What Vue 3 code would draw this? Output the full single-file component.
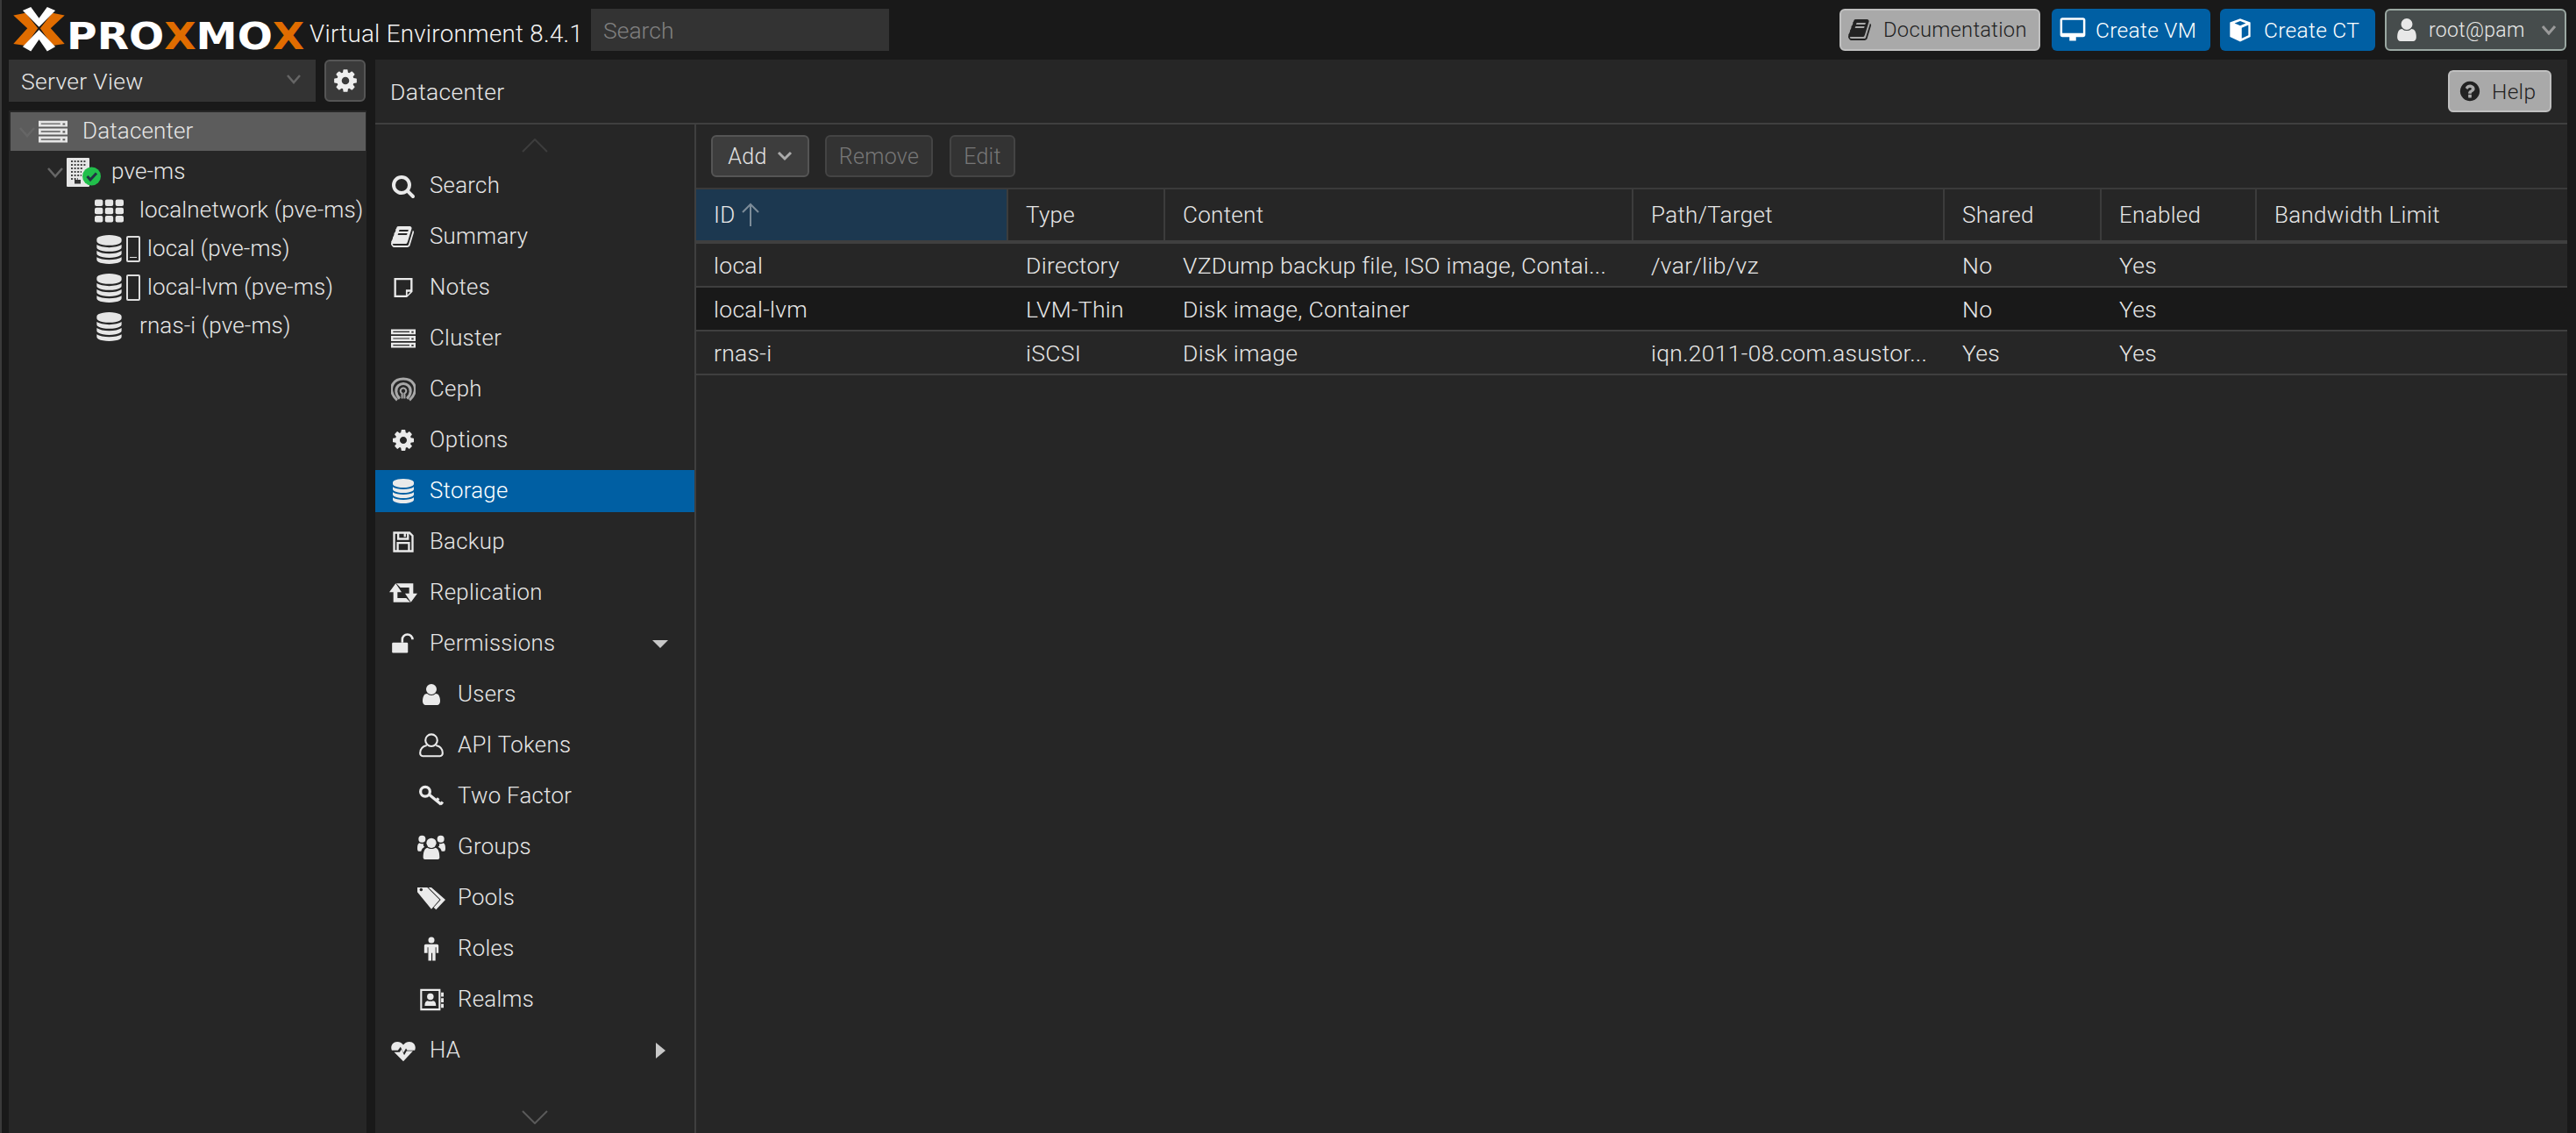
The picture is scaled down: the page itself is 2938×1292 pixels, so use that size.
<template>
  <div class="page">
    <!-- top bar -->
    <header class="topbar">
      <div class="logo">
        <svg class="logo-mark" viewBox="0 0 256 204">
          <polygon fill="#e06c00" points="40,52 82,44 124,97 82,156 40,150 88,97" />
          <polygon fill="#e06c00" points="216,52 174,44 132,97 174,156 216,150 168,97" />
          <polygon fill="#fff" points="72,36 100,24 128,62 156,24 184,36 128,92" />
          <polygon fill="#fff" points="72,160 100,176 128,135 156,176 184,160 128,102" />
        </svg>
        <span class="logo-text">PRO<b>X</b>MO<b>X</b></span>
      </div>
      <span class="version">Virtual Environment 8.4.1</span>
      <input class="top-search" placeholder="Search" />
      <div class="top-actions">
        <button class="btn btn-gray doc"><svg class="ico" :viewBox="icons.book.vb" v-html="icons.book.html"></svg>Documentation</button>
        <button class="btn btn-blue vm"><svg class="ico" :viewBox="icons.desktop.vb" v-html="icons.desktop.html"></svg>Create VM</button>
        <button class="btn btn-blue ct"><svg class="ico" :viewBox="icons.cube.vb" v-html="icons.cube.html"></svg>Create CT</button>
        <button class="btn btn-user"><svg class="ico" viewBox="256 128 1280 1536" v-html="icons.user.html"></svg>root@pam<svg class="chev user-chev" viewBox="0 0 18 12"><path d="M2 2l7 8 7-8" /></svg></button>
      </div>
    </header>

    <div class="content">
      <!-- left tree -->
      <aside class="side">
        <div class="view-bar">
          <div class="combo">Server View<svg class="chev" viewBox="0 0 18 12"><path d="M2 2l7 8 7-8" /></svg></div>
          <button class="gear"><svg class="ico" :viewBox="icons.cog.vb" v-html="icons.cog.html"></svg></button>
        </div>
        <div class="tree">
          <div v-for="n in tree" :key="n.label" class="tree-row" :class="['lvl' + n.level, { sel: n.sel, 'has-box': n.box }]">
            <svg v-if="n.level < 2" class="chev tree-chev" viewBox="0 0 18 12"><path d="M1 1l8 9 8-9" /></svg>
            <svg class="ico tree-ico" :viewBox="icons[n.icon].vb" v-html="icons[n.icon].html"></svg>
            <span v-if="n.box" class="tofu"><i v-if="n.box === 'line'"></i></span>
            <span class="tree-label">{{ n.label }}</span>
          </div>
        </div>
      </aside>

      <main class="main">
        <div class="title-bar">
          <span class="title">Datacenter</span>
          <button class="btn btn-gray help"><svg class="ico" :viewBox="icons.question.vb" v-html="icons.question.html"></svg>Help</button>
        </div>
        <div class="main-body">
          <nav class="nav">
            <svg class="scroll up" viewBox="0 0 30 16"><path d="M1 15L15 1l14 14" /></svg>
            <div class="nav-items">
              <div v-for="m in menu" :key="m.label" class="nav-row" :class="{ active: m.active, sub: m.sub }">
                <svg class="ico nav-ico" :class="{ ceph: m.icon === 'ceph', wide: wideIcons.includes(m.icon) }" :viewBox="icons[m.icon].vb" v-html="icons[m.icon].html"></svg>
                <span class="nav-label">{{ m.label }}</span>
                <svg v-if="m.caret === 'down'" class="caret" viewBox="0 0 20 20"><path d="M1 6h18l-9 9z" /></svg>
                <svg v-if="m.caret === 'right'" class="caret" viewBox="0 0 20 20"><path d="M5 1l11 9-11 9z" /></svg>
              </div>
            </div>
            <svg class="scroll down" viewBox="0 0 30 16"><path d="M1 1l14 14L29 1" /></svg>
          </nav>

          <section class="storage">
            <div class="toolbar">
              <button class="tb-btn add">Add<svg class="chev add-chev" viewBox="0 0 18 12"><path d="M2 2l7 7 7-7" /></svg></button>
              <button class="tb-btn off remove">Remove</button>
              <button class="tb-btn off edit">Edit</button>
            </div>
            <div class="grid-head">
              <div v-for="(c, i) in columns" :key="c" class="head-cell" :class="{ sorted: i === 0 }">
                {{ c }}
                <svg v-if="i === 0" class="sort" viewBox="0 0 20 28"><path d="M10 27V2M1 11l9-9 9 9" /></svg>
              </div>
            </div>
            <div v-for="(r, i) in rows" :key="r[0]" class="grid-row" :class="{ hover: i === 1 }">
              <div v-for="(v, j) in r" :key="j" class="cell">{{ v }}</div>
            </div>
          </section>
        </div>
      </main>
    </div>
  </div>
</template>

<script setup>
// font awesome 4 shapes are on a 1792 grid, the rest are hand drawn on 24
const fa = (d) => ({ vb: '0 0 1792 1792', html: `<path d="${d}"/>` })
const raw = (html) => ({ vb: '0 0 24 24', html })
const line = (d, w = 2) => `<path d="${d}" fill="none" stroke="currentColor" stroke-width="${w}"/>`

const icons = {
  search: fa('M1216 832q0-185-131.5-316.5t-316.5-131.5-316.5 131.5-131.5 316.5 131.5 316.5 316.5 131.5 316.5-131.5 131.5-316.5zm512 832q0 52-38 90t-90 38q-54 0-90-38l-343-342q-179 124-399 124-143 0-273.5-55.5t-225-150-150-225-55.5-273.5 55.5-273.5 150-225 225-150 273.5-55.5 273.5 55.5 225 150 150 225 55.5 273.5q0 220-124 399l343 343q37 37 37 90z'),
  cog: fa('M1152 896q0-106-75-181t-181-75-181 75-75 181 75 181 181 75 181-75 75-181zm512-109v222q0 12-8 23t-20 13l-185 28q-19 54-39 91 35 50 107 138 10 12 10 25t-9 23q-27 37-99 108t-94 71q-12 0-26-9l-138-108q-44 23-91 38-16 136-29 186-7 28-36 28h-222q-14 0-24.5-8.5t-11.5-21.5l-28-184q-49-16-90-37l-141 107q-10 9-25 9-14 0-25-11-126-114-165-168-7-10-7-23 0-12 8-23 15-21 51-66.5t54-70.5q-27-50-41-99l-183-27q-13-2-21-12.5t-8-23.5v-222q0-12 8-23t19-13l186-28q14-46 39-92-40-57-107-138-10-12-10-24 0-10 9-23 26-36 98.5-107.5t94.5-71.5q13 0 26 10l138 107q44-23 91-38 16-136 29-186 7-28 36-28h222q14 0 24.5 8.5t11.5 21.5l28 184q49 16 90 37l142-107q9-9 24-9 13 0 25 10 129 119 165 170 7 8 7 22 0 12-8 23-15 21-51 66.5t-54 70.5q26 50 41 98l183 28q13 2 21 12.5t8 23.5z'),
  user: fa('M1536 1399q0 109-62.5 187t-150.5 78h-854q-88 0-150.5-78t-62.5-187q0-85 8.5-160.5t31.5-152 58.5-131 94-89 134.5-34.5q131 128 313 128t313-128q76 0 134.5 34.5t94 89 58.5 131 31.5 152 8.5 160.5zm-256-887q0 159-112.5 271.5t-271.5 112.5-271.5-112.5-112.5-271.5 112.5-271.5 271.5-112.5 271.5 112.5 112.5 271.5z'),
  database: fa('M896 768q237 0 443-43t325-127v170q0 69-103 128t-280 93.5-385 34.5-385-34.5-280-93.5-103-128v-170q119 84 325 127t443 43zm0 768q237 0 443-43t325-127v170q0 69-103 128t-280 93.5-385 34.5-385-34.5-280-93.5-103-128v-170q119 84 325 127t443 43zm0-384q237 0 443-43t325-127v170q0 69-103 128t-280 93.5-385 34.5-385-34.5-280-93.5-103-128v-170q119 84 325 127t443 43zm0-1152q208 0 385 34.5t280 93.5 103 128v128q0 69-103 128t-280 93.5-385 34.5-385-34.5-280-93.5-103-128v-128q0-69 103-128t280-93.5 385-34.5z'),
  book: fa('M1639 478q40 57 18 129l-275 906q-19 64-76.5 107.5t-122.5 43.5h-923q-77 0-148.5-53.5t-99.5-131.5q-24-67-2-127 0-4 3-27t4-37q1-8-3-21.5t-3-19.5q2-11 8-21t16.5-23.5 16.5-23.5q23-38 45-91.5t30-91.5q3-10 .5-30t-.5-28q3-11 17-28t17-23q21-36 42-92t25-90q1-9-2.5-32t.5-28q4-13 22-30.5t22-22.5q19-26 42.5-84.5t27.5-96.5q1-8-3-25.5t-2-26.5q2-8 9-18t18-23 17-21q8-12 16.5-30.5t15-35 16-36 19.5-32 26.5-23.5 36-11.5 47.5 5.5l-1 3q38-9 51-9h761q74 0 114 56t18 130l-274 906q-36 119-71.5 153.5t-128.5 34.5h-869q-27 0-38 15-11 16-1 43 24 70 144 70h923q29 0 56-15.5t35-41.5l300-987q7-22 5-57 38 15 59 43zm-1064 2q-4 13 2 22.5t20 9.5h608q13 0 25.5-9.5t16.5-22.5l21-64q4-13-2-22.5t-20-9.5h-608q-13 0-25.5 9.5t-16.5 22.5zm-83 256q-4 13 2 22.5t20 9.5h608q13 0 25.5-9.5t16.5-22.5l21-64q4-13-2-22.5t-20-9.5h-608q-13 0-25.5 9.5t-16.5 22.5z'),
  question: fa('M1024 1376v-192q0-14-9-23t-23-9h-192q-14 0-23 9t-9 23v192q0 14 9 23t23 9h192q14 0 23-9t9-23zm256-672q0-88-55.5-163t-138.5-116-170-41q-243 0-371 213-15 24 8 42l132 100q7 6 19 6 16 0 25-12 53-68 86-92 34-24 86-24 48 0 85.5 26t37.5 59q0 38-20 61t-68 45q-63 28-115.5 86.5t-52.5 125.5v36q0 14 9 23t23 9h192q14 0 23-9t9-23q0-19 21.5-49.5t54.5-49.5q32-18 49-28.5t46-35 44.5-48 28-60.5 12.5-81zm384 192q0 209-103 385.5t-279.5 279.5-385.5 103-385.5-103-279.5-279.5-103-385.5 103-385.5 279.5-279.5 385.5-103 385.5 103 279.5 279.5 103 385.5z'),
  server: raw('<path d="M0 3h24v5H0zM2 5v1h16V5zM20 5v1.5h2V5zM0 9.5h24v5H0zM2 11.500v1h16v-1zM20 11.500V13h2v-1.500zM0 16h24v5H0zM2 18v1h16v-1zM20 18v1.500h2V18z"/>'),
  grid: raw('<rect x="0" y="2.500" width="6.800" height="5.500" rx="1.500"/><rect x="8.600" y="2.500" width="6.800" height="5.500" rx="1.500"/><rect x="17.200" y="2.500" width="6.800" height="5.500" rx="1.500"/><rect x="0" y="9.300" width="6.800" height="5.500" rx="1.500"/><rect x="8.600" y="9.300" width="6.800" height="5.500" rx="1.500"/><rect x="17.200" y="9.300" width="6.800" height="5.500" rx="1.500"/><rect x="0" y="16" width="6.800" height="5.500" rx="1.500"/><rect x="8.600" y="16" width="6.800" height="5.500" rx="1.500"/><rect x="17.200" y="16" width="6.800" height="5.500" rx="1.500"/>'),
  note: raw('<path d="M3 2.500h18v13.500l-5.500 5.500H3zM5 4.500v15h9.500v-5.500H19V4.500zM16 19.300l3-3.300h-3z"/>'),
  ceph: raw(line('M6 22.500C.5 18-1 11 2 6.500c4-6.500 16-6.500 20 0 3 4.500 1.500 11.500-4 16', 2.600) + line('M8.500 21C4 17 4 11 7.200 8.200c2.600-2.400 7-2.400 9.600 0 3.200 2.800 3.200 8.800-1.300 12.800', 2.600) + line('M10.800 21v-5c-2-1-2.200-3.600-.3-4.800 1-.6 2-.6 3 0 1.900 1.200 1.700 3.800-.3 4.800v5', 1.800)),
  floppy: raw(line('M3 3h15l3 3v15H3zM7 3v6h9.500V3M6.500 21v-8h11v8M13.500 3.500v3.500', 2)),
  retweet: raw('<path d="M5.500 4L0 11.500h3.500V20H18l-3.500-3.500H7v-5h3.500zM18.500 20l5.500-7.500h-3.500V4H6l3.500 3.500H17v5h-3.500z"/>'),
  unlock: raw('<rect x="1" y="11" width="15.500" height="10" rx="1"/>' + line('M11 11V8a5 5 0 0 1 10 0', 2.200)),
  userO: raw('<circle cx="12" cy="7" r="5.800" fill="none" stroke="currentColor" stroke-width="1.800"/>' + line('M7.500 12C3 13 1 16 1 19.500 1 21 2 22.500 3.500 22.500h17c1.500 0 2.500-1.500 2.500-3 0-3.500-2-6.500-6.500-7.500', 1.800)),
  key: raw('<circle cx="6" cy="7.500" r="4.600" fill="none" stroke="currentColor" stroke-width="2.800"/>' + line('M10 10.500L21.500 20M17 16.500l2-2.500M21 20l2-2.500', 2.800)),
  users: raw('<circle cx="12" cy="8.500" r="4.200"/><circle cx="4" cy="5" r="3"/><circle cx="20" cy="5" r="3"/><path d="M5 21c0-4.500 1-8 3.500-8.500 2 1.300 5 1.300 7 0 2.500.5 3.500 4 3.500 8.500 0 .8-.8 1.500-1.500 1.500h-11C5.800 22.500 5 21.800 5 21zM0 13c0-2.500.5-4 1.800-4.500 1 .7 2.200.9 3.400.5 0 1.200-.3 2 1 2.800C4.500 12.700 3.700 13.800 3.200 15.500H1c-.6 0-1-.6-1-2.500zM24 13c0-2.500-.5-4-1.800-4.500-1 .7-2.200.9-3.400.5 0 1.200.3 2-1 2.800 1.700.9 2.500 2 3 3.700H23c.6 0 1-.6 1-2.500z"/>'),
  tags: raw('<path d="M0 7V3h8.500L19 13.500l-7 8zM3.300 6.200a1.300 1.300 0 1 0-.1 0zM12 3l12 10.500-8 8.500-2-2 6-6.500L9.500 3z"/>'),
  child: raw('<circle cx="12" cy="3.500" r="3"/><path d="M6.500 7.500h11c.8 0 1.500.7 1.500 1.500v7h-2.200v-5.500h-.8v13h-3V16h-1v7.500h-3v-13h-.8V16H5V9c0-.8.7-1.500 1.500-1.500z"/>'),
  contact: raw(line('M2 2.500h18v19H2z', 1.800) + '<circle cx="11" cy="9" r="3.200"/><path d="M5.500 18c0-3.200 1-5 2.800-5 1.500.8 3.900.8 5.400 0 1.800 0 2.800 1.800 2.800 5z"/><path d="M21.500 5H24v4h-2.500zM21.500 10.500H24v4h-2.500zM21.500 16H24v4h-2.500z"/>'),
  heart: raw('<path d="M12 22.500L3 13.500h5.500l1.700-2.700 2.700 5.700 2.300-4h6.200zM.8 11.800C-1 8 1.500 3.500 6 3.500c2.800 0 4.800 1.500 6 3 1.200-1.500 3.200-3 6-3 4.500 0 7 4.500 5.200 8.300h-7.400l-1.200-2-2.500 4.300-2.800-5.800-2.600 3.500z"/>'),
  desktop: raw('<path d="M2.500 1h19c1.200 0 2 .8 2 2v13.500c0 1.200-.8 2-2 2h-19c-1.200 0-2-.8-2-2V3c0-1.200.8-2 2-2zM2.500 3v12h19V3zM9 18.500h6V22H9z"/>'),
  cube: raw('<path d="M12 1l10 3.800v14L12 23.500 2 18.800v-14zM6.500 5.600L12 8l5.500-2.400L12 3.500zM13.500 10v10.300l6.500-3V7.300z"/>'),
  building: {
    vb: '0 0 39 33',
    html: '<rect x="0" y="0" width="26" height="33" rx="1" fill="#e6e6e6"/>' +
      '<g stroke="#444" stroke-width="2" stroke-dasharray="2 1.600"><path d="M5 4h17M5 8h17M5 12h14M5 16h12M5 20h12M5 24h8"/></g>' +
      '<rect x="9" y="25" width="7" height="4.500" fill="#333"/>' +
      '<circle cx="28.500" cy="21" r="10.500" fill="#21bf4b"/>' +
      '<path d="M23.500 21l3.500 4 7-7.500" fill="none" stroke="#234" stroke-width="3"/>',
  },
}

const wideIcons = ['retweet', 'users', 'tags']

const tree = [
  { label: 'Datacenter', level: 0, icon: 'server', sel: true },
  { label: 'pve-ms', level: 1, icon: 'building' },
  { label: 'localnetwork (pve-ms)', level: 2, icon: 'grid' },
  { label: 'local (pve-ms)', level: 2, icon: 'database', box: 'line' },
  { label: 'local-lvm (pve-ms)', level: 2, icon: 'database', box: 'plain' },
  { label: 'rnas-i (pve-ms)', level: 2, icon: 'database' },
]

const menu = [
  { label: 'Search', icon: 'search' },
  { label: 'Summary', icon: 'book' },
  { label: 'Notes', icon: 'note' },
  { label: 'Cluster', icon: 'server' },
  { label: 'Ceph', icon: 'ceph' },
  { label: 'Options', icon: 'cog' },
  { label: 'Storage', icon: 'database', active: true },
  { label: 'Backup', icon: 'floppy' },
  { label: 'Replication', icon: 'retweet' },
  { label: 'Permissions', icon: 'unlock', caret: 'down' },
  { label: 'Users', icon: 'user', sub: true },
  { label: 'API Tokens', icon: 'userO', sub: true },
  { label: 'Two Factor', icon: 'key', sub: true },
  { label: 'Groups', icon: 'users', sub: true },
  { label: 'Pools', icon: 'tags', sub: true },
  { label: 'Roles', icon: 'child', sub: true },
  { label: 'Realms', icon: 'contact', sub: true },
  { label: 'HA', icon: 'heart', caret: 'right' },
]

const columns = ['ID', 'Type', 'Content', 'Path/Target', 'Shared', 'Enabled', 'Bandwidth Limit']

const rows = [
  ['local', 'Directory', 'VZDump backup file, ISO image, Contai...', '/var/lib/vz', 'No', 'Yes', ''],
  ['local-lvm', 'LVM-Thin', 'Disk image, Container', '', 'No', 'Yes', ''],
  ['rnas-i', 'iSCSI', 'Disk image', 'iqn.2011-08.com.asustor...', 'Yes', 'Yes', ''],
]
</script>

<style scoped>
.page {
  width: 2938px;
  height: 1292px;
  box-sizing: border-box;
  overflow: hidden;
  background: #191919;
  border-left: 2px solid #3a3a3a;
  color: #e6e6e6;
  font-family: Roboto, "Liberation Sans", Arial, sans-serif;
  font-weight: 300;
  font-size: 26.500px;
  letter-spacing: .3px;
}

.ico {
  display: block;
  flex: none;
  fill: currentColor;
  fill-rule: evenodd;
}

.chev {
  display: block;
  flex: none;
  width: 18px;
  height: 12px;
  fill: none;
  stroke: #666;
  stroke-width: 2.5;
}

button {
  font: inherit;
  letter-spacing: inherit;
  box-sizing: border-box;
  cursor: pointer;
}

/* top bar */
.topbar {
  height: 68px;
  box-sizing: border-box;
  display: flex;
  align-items: flex-start;
  padding: 10px 11px 0 0;
}

.logo {
  width: 351px;
  height: 58px;
  flex: none;
  display: flex;
  align-items: center;
}

.logo-mark {
  width: 85px;
  height: 68px;
  flex: none;
  margin: -10px -11px 0 0;
}

.logo-text {
  margin-top: 5px;
  font-family: "DejaVu Sans", sans-serif;
  font-weight: 700;
  font-size: 42px;
  letter-spacing: 0;
  color: #fff;
  transform: scaleX(1.125);
  transform-origin: left center;
}

.logo-text b {
  color: #e06c00;
}

.version {
  font-size: 27.700px;
  line-height: 58px;
  width: 321px;
  flex: none;
  color: #f4f4f4;
}

.top-search {
  width: 340px;
  height: 48px;
  box-sizing: border-box;
  border: none;
  outline: none;
  padding: 0 14px;
  background: #333;
  font: inherit;
  color: #ddd;
}

.top-search::placeholder {
  color: #808080;
}

.top-actions {
  margin-left: auto;
  display: flex;
}

.btn {
  height: 48px;
  display: flex;
  align-items: center;
  border-radius: 6px;
  font-size: 24.500px;
  padding: 0;
  font-weight: 300;
}

.btn-gray {
  background: #a9a9a9;
  border: 2px solid #c0c0c0;
  color: #222;
}

.btn-blue {
  background: #005fa3;
  border: none;
  color: #fff;
}

.doc {
  width: 229px;
  padding-left: 8px;
  gap: 12px;
  font-size: 23.700px;
}

.doc .ico {
  width: 28px;
  height: 28px;
}

.vm {
  width: 181px;
  margin-left: 13px;
  padding-left: 9px;
  gap: 11px;
}

.vm .ico {
  width: 30px;
  height: 30px;
}

.ct {
  width: 177px;
  margin-left: 11px;
  padding-left: 9px;
  gap: 13px;
}

.ct .ico {
  width: 28px;
  height: 30px;
}

.btn-user {
  width: 207px;
  margin-left: 11px;
  padding-left: 12px;
  gap: 14px;
  background: #464c4c;
  border: 2px solid #9aa8a2;
  color: #e8e8e8;
  font-size: 23px;
}

.btn-user .ico {
  width: 22px;
  height: 26px;
}

.user-chev {
  stroke: #9a9a9a;
  stroke-width: 3;
  margin-left: 4px;
}

/* layout */
.content {
  height: 1224px;
  display: flex;
}

.side {
  width: 408px;
  margin-left: 8px;
  flex: none;
  display: flex;
  flex-direction: column;
}

.view-bar {
  height: 48px;
  flex: none;
  display: flex;
}

.combo {
  width: 350px;
  box-sizing: border-box;
  padding: 0 16px 0 14px;
  background: #333;
  display: flex;
  align-items: center;
  justify-content: space-between;
}

.combo .chev {
  margin-top: -4px;
}

.gear {
  width: 47px;
  margin-left: 10px;
  padding: 0;
  display: flex;
  align-items: center;
  justify-content: center;
  background: #3a3a3a;
  border: 2px solid #555;
  border-radius: 6px;
  color: #eee;
}

.gear .ico {
  width: 30px;
  height: 30px;
}

.tree {
  flex: 1;
  margin-top: 10px;
  padding-top: 2px;
  background: #262626;
  font-size: 26px;
  letter-spacing: .15px;
}

.tree-row {
  height: 44px;
  display: flex;
  align-items: center;
  white-space: nowrap;
}

.tree-label {
  margin-top: -2px;
}

.tree-row.sel {
  background: #5c5c5c;
  margin: 0 1px 2px 2px;
}

.tree-chev {
  margin-right: 4px;
  margin-top: 2px;
}

.lvl0 {
  padding-left: 10px;
}

.lvl1 {
  padding-left: 44px;
}

.lvl2 {
  padding-left: 98px;
}

.tree-ico {
  width: 33px;
  height: 33px;
  margin-right: 18px;
  color: #e6e6e6;
}

.lvl0 .tree-ico {
  width: 33px;
  height: 36px;
  margin-right: 17px;
}

.lvl1 .tree-ico {
  width: 39px;
  height: 33px;
  margin-right: 12px;
}

.has-box .tree-ico {
  margin-right: 3px;
}

.tofu {
  width: 16px;
  height: 30px;
  box-sizing: border-box;
  margin-right: 8px;
  border: 2px solid #ddd;
  border-radius: 2px;
  display: flex;
  align-items: flex-end;
  justify-content: center;
  padding-bottom: 3px;
}

.tofu i {
  display: block;
  width: 8px;
  height: 1px;
  background: #ddd;
}

/* main panel */
.main {
  width: 2500px;
  margin-left: 10px;
  flex: none;
  background: #262626;
  display: flex;
  flex-direction: column;
}

.title-bar {
  height: 74px;
  box-sizing: border-box;
  flex: none;
  border-bottom: 2px solid #3f3f3f;
  display: flex;
  align-items: center;
  justify-content: space-between;
  padding: 0 18px 0 17px;
}

.title {
  margin-top: 1px;
}

.help {
  width: 118px;
  padding-left: 10px;
  gap: 12px;
}

.help .ico {
  width: 26px;
  height: 28px;
}

.main-body {
  flex: 1;
  display: flex;
}

.nav {
  width: 366px;
  box-sizing: border-box;
  flex: none;
  border-right: 2px solid #3f3f3f;
  padding-top: 16px;
  font-size: 25.800px;
}

.scroll {
  display: block;
  width: 30px;
  height: 16px;
  margin: 0 auto;
  fill: none;
  stroke-width: 2;
}

.scroll.up {
  stroke: #3d3d3d;
  margin-bottom: 14px;
}

.scroll.down {
  stroke: #5a5a5a;
  margin-top: 44px;
}

.nav-items {
  display: flex;
  flex-direction: column;
  gap: 10px;
}

.nav-row {
  height: 48px;
  display: flex;
  align-items: center;
  padding: 0 29px 0 18px;
}

.nav-label {
  margin-top: -2px;
}

.nav-row.active {
  background: #005fa3;
  color: #fff;
}

.nav-row.sub {
  padding-left: 50px;
}

.nav-ico {
  width: 28px;
  height: 28px;
  margin-right: 16px;
  color: #eaeaea;
}

.nav-ico.wide {
  width: 32px;
  height: 32px;
  margin-left: -2px;
  margin-right: 14px;
}

.nav-ico.ceph {
  color: #a8a8a8;
}

.caret {
  width: 20px;
  height: 20px;
  margin-left: auto;
  fill: #c8c8c8;
}

/* storage grid */
.storage {
  flex: 1;
  min-width: 0;
}

.toolbar {
  height: 72px;
  box-sizing: border-box;
  padding-left: 17px;
  display: flex;
  align-items: center;
}

.tb-btn {
  height: 48px;
  padding: 0;
  display: flex;
  align-items: center;
  justify-content: center;
  background: #3d3d3d;
  border: 2px solid #555;
  border-radius: 6px;
  color: #e2e2e2;
  font-size: 25px;
}

.tb-btn.off {
  background: #333;
  border-color: #444;
  color: #777;
}

.add {
  width: 112px;
  gap: 11px;
}

.add-chev {
  stroke: #aaa;
  stroke-width: 3;
  width: 18px;
}

.remove {
  width: 123px;
  margin-left: 18px;
}

.edit {
  width: 75px;
  margin-left: 19px;
}

.grid-head,
.grid-row {
  display: grid;
  grid-template-columns: 356px 179px 534px 355px 179px 177px 1fr;
}

.grid-head {
  height: 64px;
  box-sizing: border-box;
  border-top: 2px solid #3a3a3a;
  border-bottom: 4px solid #3f3f3f;
  font-size: 26px;
}

.head-cell {
  display: flex;
  align-items: center;
  padding-left: 20px;
  border-right: 2px solid #3c3c3c;
  white-space: nowrap;
}

.head-cell:last-child {
  border-right: none;
}

.head-cell.sorted {
  background: #1c3850;
}

.sort {
  width: 20px;
  height: 28px;
  margin-left: 7px;
  fill: none;
  stroke: #7d8c99;
  stroke-width: 2;
}

.grid-row {
  height: 50px;
  box-sizing: border-box;
  border-bottom: 2px solid #3f3f3f;
}

.grid-row.hover {
  background: #191919;
}

.cell {
  display: flex;
  align-items: center;
  padding-left: 20px;
  white-space: nowrap;
  overflow: hidden;
}
</style>
